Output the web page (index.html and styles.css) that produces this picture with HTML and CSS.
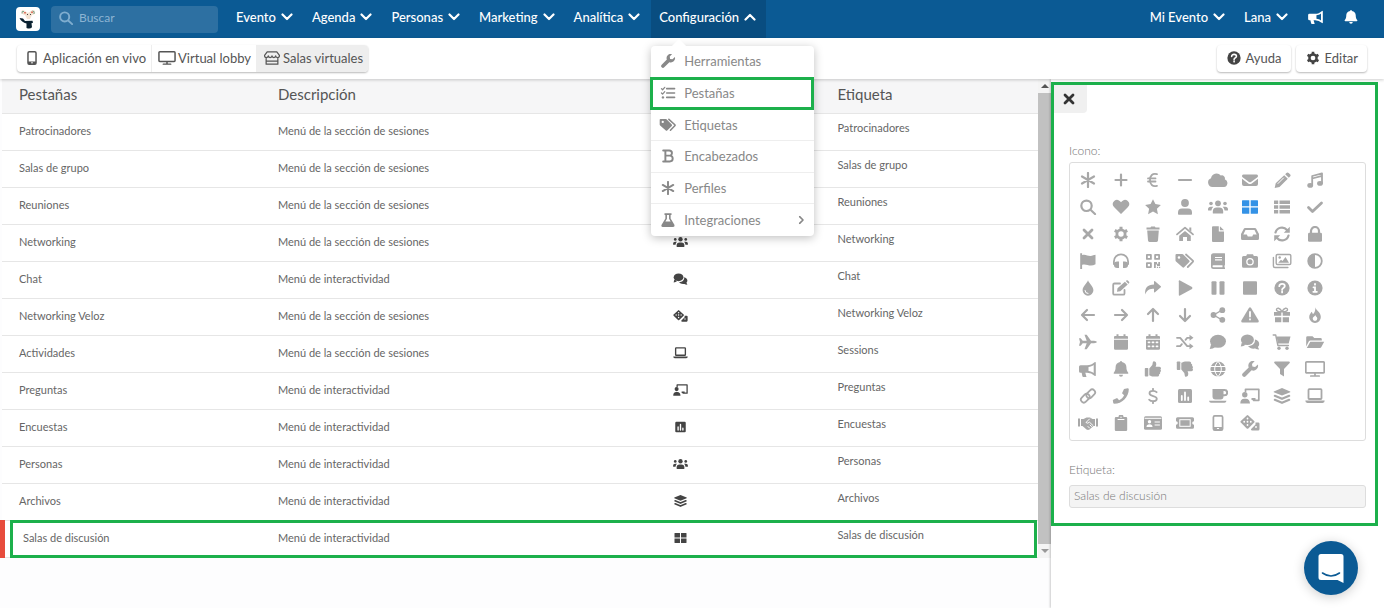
FILE: index.html
```html
<!DOCTYPE html>
<html lang="es">
<head>
<meta charset="utf-8">
<meta name="viewport" content="width=device-width, initial-scale=1">
<title>Pestañas</title>
<link rel="stylesheet" href="styles.css">
</head>
<body>
<svg class="sprite" aria-hidden="true">
<symbol id="asterisk" viewBox="0 0 20 16"><path class="s" d="M10 1v14M4 4.5l12 7M16 4.5l-12 7"/></symbol>
<symbol id="plus" viewBox="0 0 20 16"><path class="s" d="M4.5 8h11M10 2.5v11"/></symbol>
<symbol id="euro" viewBox="0 0 20 16"><path class="s m" d="M14 2.2C9.500 1 7 3.500 7 8s2.500 7 7 5.800M5 6.400h7.500M5 9.500h7.500"/></symbol>
<symbol id="minus" viewBox="0 0 20 16"><path class="s" d="M4 8h12"/></symbol>
<symbol id="cloud" viewBox="0 0 20 16"><path d="M4.500 15a4.500 4.500 0 0 1-1.500-8.700A5.500 5.500 0 0 1 12.800 3.600a3 3 0 0 1 4 3.700A4 4 0 0 1 16 15z"/></symbol>
<symbol id="envelope" viewBox="0 0 20 16"><path d="M3.500 2.500h13a1.500 1.500 0 0 1 .9 2.700L11 10a1.700 1.700 0 0 1-2 0L2.600 5.200a1.500 1.500 0 0 1 .9-2.700zM2 6.800l6.200 4.600a3 3 0 0 0 3.600 0L18 6.800V12a2 2 0 0 1-2 2H4a2 2 0 0 1-2-2z"/></symbol>
<symbol id="pencil" viewBox="0 0 20 16"><path d="M12.200 3.200l3.600 3.600-8.300 8.200-4.800 1 1-4.800zM13.200 2.200l1.200-1.200a1.600 1.600 0 0 1 2.300 0l1.300 1.300a1.600 1.600 0 0 1 0 2.300l-1.200 1.200z"/><path class="k" d="M11.500 6l-5.500 5.500"/></symbol>
<symbol id="music" viewBox="0 0 20 16"><path class="s m" d="M7.200 13V4L17 1.300V11M7.200 6.500L17 3.800"/><ellipse cx="5.200" cy="13.400" rx="2.900" ry="2.300"/><ellipse cx="15" cy="11.400" rx="2.900" ry="2.300"/></symbol>
<symbol id="search" viewBox="0 0 20 16"><circle class="s" cx="8.500" cy="6.800" r="5.200"/><path class="s" d="M12.500 10.800l4.500 4.200"/></symbol>
<symbol id="heart" viewBox="0 0 20 16"><path d="M10 15L3 7.900A4 4 0 0 1 9 2.300l1 1 1-1a4 4 0 0 1 6 5.600z"/></symbol>
<symbol id="star" viewBox="0 0 20 16"><path d="M10 .2l2.400 4.900 5.500.8-4 3.800 1 5.500L10 12.600l-4.900 2.600 1-5.500-4-3.800 5.500-.8z"/></symbol>
<symbol id="user" viewBox="0 0 20 16"><circle cx="10" cy="4" r="3.900"/><path d="M3 15v-1.500a4 4 0 0 1 4-4h6a4 4 0 0 1 4 4V15q0 .8-.8.8H3.800q-.8 0-.8-.8z"/></symbol>
<symbol id="users" viewBox="0 0 20 16"><circle cx="10" cy="4.300" r="2.900"/><circle cx="3" cy="4.500" r="1.800"/><circle cx="17" cy="4.500" r="1.800"/><path d="M4.800 14v-1.500a4 4 0 0 1 4-4h2.400a4 4 0 0 1 4 4V14q0 .6-.6.6H5.400q-.6 0-.6-.6zM0 10.500a2.800 2.800 0 0 1 2.800-2.800h2.500A6 6 0 0 0 3.400 11.500H.6q-.6 0-.6-.6zM20 10.500a2.800 2.800 0 0 0-2.800-2.800h-2.500a6 6 0 0 1 1.900 3.800h2.800q.6 0 .6-.6z"/></symbol>
<symbol id="grid" viewBox="0 0 20 16"><path d="M2.500 1.300h6.800v6H2v-5.500zM10.700 1.300h6.800l.5.500v5.500h-7.300zM2 8.600h7.300v6.100H2.500l-.5-.5zM10.700 8.600H18v5.600l-.5.500h-6.800z"/></symbol>
<symbol id="list" viewBox="0 0 20 16"><path d="M2.300 1.500h3.900v3.600H2V1.800zM7.500 1.500H18v3.600H7.500zM2 6.200h4.200v3.600H2zM7.500 6.200H18v3.600H7.500zM2 10.900h4.200v3.600H2zM7.500 10.900H18v3.600H7.500z"/></symbol>
<symbol id="check" viewBox="0 0 20 16"><path class="s b" d="M3.500 8.500l4 4 9-8.500"/></symbol>
<symbol id="times" viewBox="0 0 20 16"><path class="s b" d="M6 4l8 8M14 4l-8 8"/></symbol>
<symbol id="cog" viewBox="0 0 20 16"><circle class="s b" cx="10" cy="8" r="4.100"/><path class="s t" d="M10 .8v3M10 12.200v3M3.800 4.400l2.600 1.500M13.600 10.100l2.600 1.500M16.200 4.400l-2.600 1.500M6.400 10.100l-2.600 1.500"/></symbol>
<symbol id="trash" viewBox="0 0 20 16"><path d="M3.500 1.500h4l.6-1h3.800l.6 1h4v2h-13zM4.200 4.600h11.600l-.8 9.900a1.500 1.500 0 0 1-1.500 1.400h-7A1.500 1.500 0 0 1 5 14.500z"/></symbol>
<symbol id="home" viewBox="0 0 20 16"><path d="M10 5l5.800 4.800V15H12v-4H8v4H4.200V9.800zM14.300 1.500h2v4.200l-2-1.700z"/><path class="s m" d="M2 8.400l8-6.800 8 6.800"/></symbol>
<symbol id="file" viewBox="0 0 20 16"><path d="M4 1.200Q4 .2 5 .2h5.800v5.200H16V15q0 1-1 1H5q-1 0-1-1zM11.900.2L16 4.300h-4.100z"/></symbol>
<symbol id="inbox" viewBox="0 0 20 16"><path fill-rule="evenodd" d="M5 2h10q.8 0 1.200.7L19 8v4.500a1.500 1.500 0 0 1-1.500 1.500h-15A1.500 1.500 0 0 1 1 12.500V8l2.800-5.300Q4.200 2 5 2zM5.500 4L3.300 8.500h3.500l1 2h4.400l1-2h3.500L14.500 4z"/></symbol>
<symbol id="sync" viewBox="0 0 20 16"><path class="s" d="M3.500 6.500A6.600 6.600 0 0 1 15 4M16.500 9.500A6.600 6.600 0 0 1 5 12"/><path d="M17.800.8v6h-6zM2.200 15.200v-6h6z"/></symbol>
<symbol id="lock" viewBox="0 0 20 16"><rect x="3" y="6.800" width="14" height="9" rx="1.400"/><path class="s" d="M6 7V5a4 4 0 0 1 8 0v2"/></symbol>
<symbol id="flag" viewBox="0 0 20 16"><path d="M2.200.3h1.900v15.600H2.200zM3.800 2.200c3.500-1.500 5.700.9 8.700.8 2 0 3.500-1.200 5-1.200v9.500c-1.500.8-3 1.200-4.500 1.200-3.500 0-5.500-2-9.200-.6z"/></symbol>
<symbol id="headphones" viewBox="0 0 20 16"><path class="s m" d="M2.900 11V8.500a7.100 7.100 0 0 1 14.200 0V11"/><path d="M8 8.500V15H6.200a3.200 3.200 0 0 1 0-6.500zM12 8.500V15h1.800a3.200 3.200 0 0 0 0-6.500z"/></symbol>
<symbol id="qr" viewBox="0 0 20 16"><path class="s m" d="M3.900 1.900h4v4h-4zM12.100 1.900h4v4h-4zM3.900 10.100h4v4h-4z"/><path d="M11 9h3v1.800h1.300V9H17v4h-3v-1.500h-1.200V15H11zM13.900 13.800h1.200V15h-1.200zM16 13.800h1.200V15H16z"/></symbol>
<symbol id="tags" viewBox="0 0 20 16"><path fill-rule="evenodd" d="M.5 2Q.5 1 1.500 1h5.800q.6 0 1 .4l6 6q.8.800 0 1.600l-5.200 5.300q-.8.800-1.600 0L1 8.500q-.5-.5-.5-1zM4 3.200a1.300 1.300 0 1 0 0 2.600 1.300 1.300 0 0 0 0-2.600z"/><path class="s m" d="M11 1.500l6.800 6.200q.6.600 0 1.200L12.800 14"/></symbol>
<symbol id="book" viewBox="0 0 20 16"><path fill-rule="evenodd" d="M5.500.2h11q.5 0 .5.500v11q0 .5-.5.700v2h.5V16H5.500A2.500 2.500 0 0 1 3 13.500V2.700A2.500 2.500 0 0 1 5.500.2zM7 4v1.100h7V4zM7 6.300v1.100h7V6.300zM5.500 12.300a1 1 0 0 0 0 2h9v-2z"/></symbol>
<symbol id="camera" viewBox="0 0 20 16"><path fill-rule="evenodd" d="M3.500 3h2.700L7 1.200h6l.8 1.800h2.700A1.500 1.500 0 0 1 18 4.500v8.800a1.500 1.500 0 0 1-1.500 1.500h-13A1.500 1.500 0 0 1 2 13.300V4.500A1.500 1.500 0 0 1 3.500 3zM10 5a3.800 3.800 0 1 0 0 7.600A3.800 3.800 0 0 0 10 5z"/><circle cx="10" cy="8.800" r="2.500"/></symbol>
<symbol id="images" viewBox="0 0 20 16"><path class="s n" d="M5.500 1.500h12q1.300 0 1.300 1.300v7.400q0 1.300-1.300 1.300h-12q-1.300 0-1.300-1.300V2.800q0-1.300 1.300-1.300zM1.400 4.500V13q0 1.500 1.500 1.500h13"/><path d="M6.200 9.700L9 6.700l1.500 1.200L13.500 4l3.500 5.700z"/><circle cx="7.700" cy="4.500" r="1.200"/></symbol>
<symbol id="contrast" viewBox="0 0 20 16"><circle class="s m" cx="10" cy="8" r="6.800"/><path d="M10 1.500v13a6.500 6.500 0 0 1 0-13z"/></symbol>
<symbol id="drop" viewBox="0 0 20 16"><path d="M10 .3c1 3.200 5.400 5.900 5.400 10a5.400 5.400 0 0 1-10.800 0C4.600 6.200 9 3.500 10 .3z"/><path class="k" d="M7 10.500a3 3 0 0 0 3 3"/></symbol>
<symbol id="edit" viewBox="0 0 20 16"><path class="s m" d="M13.500 10v3.400q0 1.300-1.300 1.300H3.500q-1.300 0-1.300-1.300V4.800q0-1.300 1.300-1.300H9"/><path d="M6.500 8.300l7.400-6.600 2.800 2.900-7.400 6.600-3.300.5zM14.800 1l.6-.5q.8-.6 1.500 0l1.100 1.200q.7.800 0 1.500l-.6.600z"/></symbol>
<symbol id="forward" viewBox="0 0 20 16"><path d="M2.300 14.500C1.500 8 4.500 4.600 11 4.600V1.500q.2-.8 1-.3l5.800 5.100q.5.500 0 1L12 12.300q-.8.500-1-.3V8.800c-4 0-7 .8-8.700 5.700z"/></symbol>
<symbol id="play" viewBox="0 0 20 16"><path d="M3.800 1.200q0-1.200 1.200-.7l12 6.600q.9.900 0 1.800l-12 6.600q-1.200.5-1.200-.7z"/></symbol>
<symbol id="pause" viewBox="0 0 20 16"><rect x="3.500" y="1.200" width="5" height="13.600" rx="1"/><rect x="11.500" y="1.200" width="5" height="13.600" rx="1"/></symbol>
<symbol id="stop" viewBox="0 0 20 16"><rect x="3" y="1.300" width="14" height="13.400" rx="1"/></symbol>
<symbol id="question" viewBox="0 0 20 16"><circle cx="10" cy="8" r="7.600"/><path class="k w" d="M7.300 6.200C7.300 3 12.800 3.300 12.800 6c0 2-2.700 1.900-2.700 3.700M10.100 11.500v.9"/></symbol>
<symbol id="info" viewBox="0 0 20 16"><circle cx="10" cy="8" r="7.600"/><path class="k w" d="M8.500 7.300H10v4.200M8.300 11.800h3.600M10 3.800v.9"/></symbol>
<symbol id="left" viewBox="0 0 20 16"><path class="s" d="M16 8H4.500M9 3L4 8l5 5"/></symbol>
<symbol id="right" viewBox="0 0 20 16"><path class="s" d="M4 8h11.500M11 3l5 5-5 5"/></symbol>
<symbol id="up" viewBox="0 0 20 16"><path class="s" d="M10 14V2.500M5 7l5-5 5 5"/></symbol>
<symbol id="down" viewBox="0 0 20 16"><path class="s" d="M10 2v11.500M5 9l5 5 5-5"/></symbol>
<symbol id="share" viewBox="0 0 20 16"><circle cx="5.500" cy="8" r="2.900"/><circle cx="14.300" cy="3.200" r="2.900"/><circle cx="14.300" cy="12.800" r="2.900"/><path class="s n" d="M14 3.200L5.500 8l8.500 4.800"/></symbol>
<symbol id="warning" viewBox="0 0 20 16"><path d="M8.900.9q1.100-1.400 2.200 0l7.500 12.700q.6 1.700-1.100 1.900h-15Q.8 15.300 1.400 13.600z"/><path class="k w" d="M10 5v4.500M10 12.200v.4"/></symbol>
<symbol id="gift" viewBox="0 0 20 16"><path d="M2 5h7.300v3.800H2zM10.700 5H18v3.800h-7.300zM3 10.200h6.300v5H3zM10.700 10.200H17v5h-6.300z"/><path class="s n" d="M10 4.800C5.500 4.800 4.500 4 4.500 2.700 4.500.5 8 .2 10 4.800zM10 4.800c4.500 0 5.500-.8 5.500-2.100C15.500.5 12 .2 10 4.800z"/></symbol>
<symbol id="fire" viewBox="0 0 20 16"><path d="M10.300.2c.8 3.200 5.500 4.800 5.500 9.800a5.800 5.800 0 0 1-11.600.2C4.200 7.300 6 6 6.500 4.700c.8.700 1.300 1.500 1.400 2.600C9.700 5.800 10.600 3 10.300.2z"/><path class="h" d="M10.300 8c.3 1.600 2 2 2 3.600a2.300 2.300 0 0 1-4.600 0C7.700 10 9.800 9.600 10.300 8z"/></symbol>
<symbol id="plane" viewBox="0 0 20 16"><path d="M1 4.300h1.700l2 2.400h4L6.500.7h2.200l4.300 6h3q2.700.3 3 1.300-.3 1-3 1.300h-3l-4.300 6H6.500l2.200-6h-4l-2 2.400H1L2 8z"/></symbol>
<symbol id="calendar" viewBox="0 0 20 16"><path d="M4 2h1.500V.2h2V2h5V.2h2V2H16q1 0 1 1v1.800H3V3q0-1 1-1zM3 5.700h14v8.800q0 1.300-1.300 1.300H4.300Q3 15.800 3 14.500z"/></symbol>
<symbol id="days" viewBox="0 0 20 16"><use href="#calendar"/><path class="k w" d="M5.500 8.300h1M9.500 8.300h1M13.500 8.300h1M5.500 12.300h1M9.500 12.300h1M13.500 12.300h1"/></symbol>
<symbol id="random" viewBox="0 0 20 16"><path class="s m" d="M2 3.800h3.200l7 8.400H15M2 12.200h3.200l1.700-2M10.500 5.800l1.700-2H15"/><path d="M14.500.8l4 3-4 3zM14.500 9.200l4 3-4 3z"/></symbol>
<symbol id="comment" viewBox="0 0 20 16"><ellipse cx="10" cy="7.300" rx="8" ry="6.500"/><path d="M3.200 10l-1.500 5q3.500 0 5.300-1.800z"/></symbol>
<symbol id="comments" viewBox="0 0 20 16"><ellipse cx="7.400" cy="5.800" rx="6.500" ry="5.200"/><path d="M1.800 8.500L.8 12.500q3 0 4.700-1.800zM14.900 5.500c2.500.5 4.300 2.200 4.300 4.400 0 1.200-.5 2.200-1.300 3l1.300 2.600q-2.500 0-4-1c-3 .5-5.800-.3-7.200-2.400 4.200 0 7.500-2.800 6.900-6.600z"/></symbol>
<symbol id="cart" viewBox="0 0 20 16"><path class="s n" d="M1.200 1h2.500l2.200 10.500h10.500"/><path d="M4.500 2.500h14l-1.800 7H6z"/><circle cx="7" cy="14.200" r="1.700"/><circle cx="15" cy="14.200" r="1.700"/></symbol>
<symbol id="folder" viewBox="0 0 20 16"><path d="M1.200 12.500v-9q0-1.300 1.300-1.300h5l1.800 1.700h6.200q1.300 0 1.300 1.300v1.200H5.400q-1 0-1.500.9zM5.300 7.700h13.900l-3 5.500q-.4.700-1.200.7H1.800z"/></symbol>
<symbol id="bullhorn" viewBox="0 0 20 16"><path fill-rule="evenodd" d="M2.500 4.300H9c3 0 5.500-1.200 7.500-3q1.300-.9 1.300.5v12.400q0 1.400-1.300.5-3-2.900-7.500-3H2.500Q1 11.700 1 10.200V5.800q0-1.500 1.500-1.500zM10.500 6v4c2 .3 3.800.9 5.200 2V4C14.300 5.100 12.500 5.700 10.500 6z"/><path d="M3.500 11h3.600l1.400 4.900H5.400q-.8 0-1-.7z"/></symbol>
<symbol id="bell" viewBox="0 0 20 16"><path d="M9 1a1 1 0 0 1 2 0c2.800.5 4.400 2.500 4.400 5 0 3 .7 4.200 1.700 5.400.5.600.2 1.400-.6 1.400h-13c-.8 0-1.100-.8-.6-1.400C3.900 10.200 4.600 9 4.600 6c0-2.500 1.600-4.500 4.400-5zM8 13.800h4a2 2 0 0 1-4 0z"/></symbol>
<symbol id="thumb" viewBox="0 0 20 16"><rect x="1.800" y="7" width="3.500" height="8.500" rx=".7"/><path d="M6.300 7.500l3-3.600.6-2.800q.3-1 1.200-.9 2.200.3 2.200 2.800 0 1-.7 2.700h3.800q1.600.2 1.600 1.600 0 .8-.6 1.300.8.600.5 1.500-.2.800-.9 1.100.4.600.1 1.300-.3.700-1 .8.200 1-.4 1.600-.5.600-1.500.6H10c-1.500 0-2.300-.8-3.700-1.300z"/></symbol>
<symbol id="thumbdown" viewBox="0 0 20 16"><g transform="translate(0 16) scale(1 -1)"><use href="#thumb"/></g></symbol>
<symbol id="globe" viewBox="0 0 20 16"><circle cx="10" cy="8" r="7.600"/><path class="k" d="M2 5.500h16M2 10.500h16M10 .4C5.500 5 5.500 11 10 15.600M10 .4c4.500 4.600 4.500 10.600 0 15.200"/></symbol>
<symbol id="wrench" viewBox="0 0 20 16"><path d="M17.900 3.500a4.800 4.800 0 0 1-6.300 5.800l-5.900 5.900a2 2 0 0 1-2.900-2.900l5.900-5.900A4.800 4.800 0 0 1 14.700.1L12 2.900l.4 2.700 2.700.4z"/></symbol>
<symbol id="filter" viewBox="0 0 20 16"><path d="M2.800.5h14.400q1.100.6.500 1.500L12 8v7.500l-4-2.600V8L2.300 2Q1.700 1.100 2.800.5z"/></symbol>
<symbol id="desktop" viewBox="0 0 20 16"><path class="s d" d="M1.800.9h16.400q1 0 1 1v9q0 1-1 1H1.800q-1 0-1-1v-9q0-1 1-1zM10 12v2.500M5.800 15h8.400"/></symbol>
<symbol id="link" viewBox="0 0 20 16"><g transform="rotate(-45 10 8)"><rect class="s m" x="1.600" y="4.700" width="9.800" height="5.800" rx="2.900"/><rect class="s m" x="8.600" y="5.500" width="9.800" height="5.800" rx="2.900"/></g></symbol>
<symbol id="phone" viewBox="0 0 20 16"><path d="M13 .9l3.700-.7q1 0 1.100 1C17.800 9 11 15.800 3.200 15.800q-.8 0-1-1L1.800 12l4.300-1.900 2 2.100c2.300-1.100 4-2.800 5-5L11 5.200z"/></symbol>
<symbol id="dollar" viewBox="0 0 20 16"><path class="s m" d="M13.600 4.200C12.600 3.200 11.500 2.900 10 2.900c-2.200 0-3.500 1-3.500 2.400 0 3.600 7.300 1.900 7.300 5.400 0 1.600-1.500 2.500-3.800 2.500-1.700 0-3-.5-3.800-1.500M10 .8v2M10 13.200v2"/></symbol>
<symbol id="poll" viewBox="0 0 20 16"><rect x="3" y="1" width="14" height="14" rx="1.500"/><path class="k w" d="M6.800 8v4M10 4.500V12M13.200 9.500V12"/></symbol>
<symbol id="coffee" viewBox="0 0 20 16"><path fill-rule="evenodd" d="M4.500 1h12a3.600 3.600 0 0 1 0 7.300h-1V8.500a3 3 0 0 1-3 3h-5a3 3 0 0 1-3-3zM15.500 3v3.300h1a1.600 1.600 0 0 0 0-3.300zM1 12.800h17.500q-.3 2-2 2H3q-1.700 0-2-2z"/></symbol>
<symbol id="teacher" viewBox="0 0 20 16"><path class="s d" d="M5.500 3.500V1.300h13.300v11H13.500"/><circle cx="4.800" cy="6.800" r="2.700"/><path d="M.3 15.500q0-4.700 4-4.700h1.500q3.900 0 4.200 4.700zM11.500 10h4v2h-4z"/></symbol>
<symbol id="layers" viewBox="0 0 20 16"><path d="M10 0l8.200 3.400q.4.400 0 .8L10 7.600 1.800 4.200q-.4-.4 0-.8z"/><path class="s" d="M2.800 7.800l7.200 3 7.200-3M2.800 11.800l7.200 3 7.200-3"/></symbol>
<symbol id="laptop" viewBox="0 0 20 16"><rect class="s m" x="3.500" y="1.200" width="13" height="9.800" rx=".7"/><path d="M.3 12.600h19.400q0 2.400-2 2.400H2.300q-2 0-2-2.400z"/></symbol>
<symbol id="handshake" viewBox="0 0 20 16"><path d="M0 3.500h2v8H0zM18 3.500h2v8h-2zM3 4h2.500L8.500 2.500h3.500L14.500 4H17v7h-1.500l-4 3.500q-1.500.8-3 0L4.500 11H3z"/><path class="k" d="M11.500 4L8 7.500q1.500 1.500 3.500-.3L15 10.500M12 10l1.500 1.500M10 11.500l1.500 1.500"/></symbol>
<symbol id="clipboard" viewBox="0 0 20 16"><path d="M5 2h2.500a2.500 2.500 0 0 1 5 0H15q1.200 0 1.200 1.200v11.500q0 1.200-1.200 1.200H5q-1.200 0-1.200-1.200V3.200Q3.800 2 5 2z"/><path class="k" d="M7 4.500h6M10 2v.6"/></symbol>
<symbol id="idcard" viewBox="0 0 20 16"><rect x="1" y="1.300" width="18" height="13.400" rx="1.500"/><circle class="h" cx="6.500" cy="6.700" r="1.700"/><path class="h" d="M3.500 12q0-2.800 3-2.800t3 2.800z"/><path class="k" d="M2 3.300h16M12 7h4.500M12 10h4.500"/></symbol>
<symbol id="ticket" viewBox="0 0 20 16"><path d="M2.500 2.300h15q1.500 0 1.500 1.500v2.400a1.800 1.800 0 0 0 0 3.600v2.400q0 1.500-1.500 1.500h-15q-1.500 0-1.500-1.500V9.800a1.800 1.800 0 0 0 0-3.600V3.800q0-1.500 1.500-1.500z"/><rect class="k" x="4.800" y="4.700" width="10.400" height="6.600"/></symbol>
<symbol id="mobile" viewBox="0 0 20 16"><rect class="s d" x="5.400" y=".9" width="9.200" height="14.200" rx="1.400"/><path d="M5.400 12h9.200v3H5.400z"/><path class="k" d="M9.300 13.500h1.400"/></symbol>
<symbol id="dice" viewBox="0 0 20 16"><path d="M6.700.5q.8-.8 1.600 0l5.900 5.400q.8.800 0 1.600l-5.900 5.900q-.8.800-1.600 0L.8 7.500q-.8-.8 0-1.600zM15.500 7.500h2.700q1.300 0 1.300 1.300V14q0 1.500-1.300 1.500h-6q-1.200 0-1.300-1.300l4.600-4.700z"/><path class="k w" d="M7.500 3.400v.1M4.200 6.700v.1M7.500 6.700v.1M10.800 6.700v.1M7.500 10v.1M16 12v.1"/></symbol>
<symbol id="tasks" viewBox="0 0 20 16"><path class="s m" d="M8.500 3h9M8.500 8h9M8.500 13h9"/><path class="s n" d="M2.500 3l1.300 1.300L6.300 1.500M2.500 8l1.300 1.300 2.500-2.800"/><circle cx="4.200" cy="13" r="1.400"/></symbol>
<symbol id="bold" viewBox="0 0 20 16"><path class="s" d="M4.500 1.800h6.800c4.300 0 4.300 5.800 0 5.800H7h5c4.500 0 4.500 6.600 0 6.600H4.500M7 1.800v12.400"/></symbol>
<symbol id="flask" viewBox="0 0 20 16"><path fill-rule="evenodd" d="M6 .3h8v1.900h-1v4l4.300 7.300q1 2.200-1.300 2.400H4q-2.300-.2-1.300-2.400L7 6.200v-4H6zM8.800 2.200v4.500L7 9.800h6l-1.800-3.100V2.200z"/></symbol>
<symbol id="store" viewBox="0 0 20 16"><path class="s n" d="M4.500 1h11L18.500 5q0 2.500-2.100 2.500T14.200 5.500q0 2-2.100 2T10 5.500q0 2-2.100 2t-2.100-2q0 2-2.200 2T1.500 5zM3.300 8v7h13.400V8M3.300 11.500h13.400"/></symbol>
<symbol id="chevron" viewBox="0 0 12 8"><path class="s" d="M1.500 1.500L6 6l4.500-4.500"/></symbol>
</svg>

<header class="topbar">
  <a class="logo" href="#" aria-label="Inicio">
    <svg viewBox="0 0 24 24" aria-hidden="true"><path fill="#f4e3d2" d="M9 4q-3-2-3.500.5T9 8l2 4h3l2-4q4-1 3-3.500T15 4l-3 2z"/><path fill="none" stroke="#7aa58c" d="M6 6.500q-.5-3 2-2M18 7q1-3-1.500-3"/><path fill="#dc7a68" d="M8 5h2v1.500H8zM15 4.500h2V6h-2z"/><path fill="#444" d="M11 7h1v1h-1zM14 7h1v1h-1z"/><path fill="#0b2231" d="M3.500 11l3.500.5 2 2.500 7.500-.3.500 2-1.500.6.500 4q-2 2-5.500.6v-4.500q-5-1-7-5.400z"/></svg>
  </a>
  <label class="search">
    <svg class="icon" aria-hidden="true"><use href="#search"/></svg>
    <input type="search" placeholder="Buscar" aria-label="Buscar">
  </label>
  <nav class="nav">
    <button class="nav-item" type="button">Evento<svg class="caret"><use href="#chevron"/></svg></button>
    <button class="nav-item" type="button">Agenda<svg class="caret"><use href="#chevron"/></svg></button>
    <button class="nav-item" type="button">Personas<svg class="caret"><use href="#chevron"/></svg></button>
    <button class="nav-item" type="button">Marketing<svg class="caret"><use href="#chevron"/></svg></button>
    <button class="nav-item" type="button">Analítica<svg class="caret"><use href="#chevron"/></svg></button>
    <div class="nav-group">
      <button class="nav-item open" type="button" aria-expanded="true">Configuración<svg class="caret"><use href="#chevron"/></svg></button>
      <div class="menu">
        <a href="#"><svg class="icon"><use href="#wrench"/></svg>Herramientas</a>
        <a href="#" class="marked"><svg class="icon"><use href="#tasks"/></svg>Pestañas</a>
        <a href="#"><svg class="icon"><use href="#tags"/></svg>Etiquetas</a>
        <a href="#"><svg class="icon"><use href="#bold"/></svg>Encabezados</a>
        <a href="#"><svg class="icon"><use href="#asterisk"/></svg>Perfiles</a>
        <a href="#"><svg class="icon"><use href="#flask"/></svg>Integraciones<svg class="caret side-caret"><use href="#chevron"/></svg></a>
      </div>
    </div>
  </nav>
  <div class="account">
    <button class="nav-item" type="button">Mi Evento<svg class="caret"><use href="#chevron"/></svg></button>
    <button class="nav-item" type="button">Lana<svg class="caret"><use href="#chevron"/></svg></button>
    <button class="nav-icon" type="button" aria-label="Anuncios"><svg class="icon"><use href="#bullhorn"/></svg></button>
    <button class="nav-icon" type="button" aria-label="Notificaciones"><svg class="icon"><use href="#bell"/></svg></button>
  </div>
</header>

<div class="toolbar">
  <div class="tabs">
    <button type="button"><svg class="icon"><use href="#mobile"/></svg>Aplicación en vivo</button>
    <button type="button"><svg class="icon"><use href="#desktop"/></svg>Virtual lobby</button>
    <button type="button" class="active"><svg class="icon"><use href="#store"/></svg>Salas virtuales</button>
  </div>
  <div class="actions">
    <button type="button"><svg class="icon"><use href="#question"/></svg>Ayuda</button>
    <button type="button"><svg class="icon"><use href="#cog"/></svg>Editar</button>
  </div>
</div>

<main class="main">
  <section class="list">
    <div class="list-body">
      <table>
        <thead><tr><th scope="col">Pestañas</th><th scope="col">Descripción</th><th scope="col"></th><th scope="col">Etiqueta</th></tr></thead>
        <tbody>
          <tr><td>Patrocinadores</td><td>Menú de la sección de sesiones</td><td></td><td>Patrocinadores</td></tr>
          <tr><td>Salas de grupo</td><td>Menú de la sección de sesiones</td><td></td><td>Salas de grupo</td></tr>
          <tr><td>Reuniones</td><td>Menú de la sección de sesiones</td><td></td><td>Reuniones</td></tr>
          <tr><td>Networking</td><td>Menú de la sección de sesiones</td><td><svg class="icon"><use href="#users"/></svg></td><td>Networking</td></tr>
          <tr><td>Chat</td><td>Menú de interactividad</td><td><svg class="icon"><use href="#comments"/></svg></td><td>Chat</td></tr>
          <tr><td>Networking Veloz</td><td>Menú de la sección de sesiones</td><td><svg class="icon"><use href="#dice"/></svg></td><td>Networking Veloz</td></tr>
          <tr><td>Actividades</td><td>Menú de la sección de sesiones</td><td><svg class="icon"><use href="#laptop"/></svg></td><td>Sessions</td></tr>
          <tr><td>Preguntas</td><td>Menú de interactividad</td><td><svg class="icon"><use href="#teacher"/></svg></td><td>Preguntas</td></tr>
          <tr><td>Encuestas</td><td>Menú de interactividad</td><td><svg class="icon"><use href="#poll"/></svg></td><td>Encuestas</td></tr>
          <tr><td>Personas</td><td>Menú de interactividad</td><td><svg class="icon"><use href="#users"/></svg></td><td>Personas</td></tr>
          <tr><td>Archivos</td><td>Menú de interactividad</td><td><svg class="icon"><use href="#layers"/></svg></td><td>Archivos</td></tr>
          <tr class="selected"><td>Salas de discusión</td><td>Menú de interactividad</td><td><svg class="icon"><use href="#grid"/></svg></td><td>Salas de discusión</td></tr>
        </tbody>
      </table>
    </div>
    <div class="scrollbar" aria-hidden="true"><span class="arrow-up"></span><span class="thumb"></span><span class="arrow-down"></span></div>
  </section>

  <aside class="panel">
    <div class="panel-box">
      <button class="close" type="button" aria-label="Cerrar"><svg class="icon"><use href="#times"/></svg></button>
      <div class="form">
        <span class="label" id="icon-label">Icono:</span>
        <div class="picker" role="group" aria-labelledby="icon-label">
          <button type="button" aria-label="Asterisco"><svg class="icon"><use href="#asterisk"/></svg></button>
          <button type="button" aria-label="Más"><svg class="icon"><use href="#plus"/></svg></button>
          <button type="button" aria-label="Euro"><svg class="icon"><use href="#euro"/></svg></button>
          <button type="button" aria-label="Menos"><svg class="icon"><use href="#minus"/></svg></button>
          <button type="button" aria-label="Nube"><svg class="icon"><use href="#cloud"/></svg></button>
          <button type="button" aria-label="Sobre"><svg class="icon"><use href="#envelope"/></svg></button>
          <button type="button" aria-label="Lápiz"><svg class="icon"><use href="#pencil"/></svg></button>
          <button type="button" aria-label="Música"><svg class="icon"><use href="#music"/></svg></button>
          <button type="button" aria-label="Lupa"><svg class="icon"><use href="#search"/></svg></button>
          <button type="button" aria-label="Corazón"><svg class="icon"><use href="#heart"/></svg></button>
          <button type="button" aria-label="Estrella"><svg class="icon"><use href="#star"/></svg></button>
          <button type="button" aria-label="Persona"><svg class="icon"><use href="#user"/></svg></button>
          <button type="button" aria-label="Grupo"><svg class="icon"><use href="#users"/></svg></button>
          <button type="button" aria-label="Cuadrícula" aria-pressed="true"><svg class="icon"><use href="#grid"/></svg></button>
          <button type="button" aria-label="Lista"><svg class="icon"><use href="#list"/></svg></button>
          <button type="button" aria-label="Visto"><svg class="icon"><use href="#check"/></svg></button>
          <button type="button" aria-label="Aspa"><svg class="icon"><use href="#times"/></svg></button>
          <button type="button" aria-label="Engranaje"><svg class="icon"><use href="#cog"/></svg></button>
          <button type="button" aria-label="Papelera"><svg class="icon"><use href="#trash"/></svg></button>
          <button type="button" aria-label="Casa"><svg class="icon"><use href="#home"/></svg></button>
          <button type="button" aria-label="Archivo"><svg class="icon"><use href="#file"/></svg></button>
          <button type="button" aria-label="Bandeja"><svg class="icon"><use href="#inbox"/></svg></button>
          <button type="button" aria-label="Sincronizar"><svg class="icon"><use href="#sync"/></svg></button>
          <button type="button" aria-label="Candado"><svg class="icon"><use href="#lock"/></svg></button>
          <button type="button" aria-label="Bandera"><svg class="icon"><use href="#flag"/></svg></button>
          <button type="button" aria-label="Auriculares"><svg class="icon"><use href="#headphones"/></svg></button>
          <button type="button" aria-label="Código QR"><svg class="icon"><use href="#qr"/></svg></button>
          <button type="button" aria-label="Etiquetas"><svg class="icon"><use href="#tags"/></svg></button>
          <button type="button" aria-label="Libro"><svg class="icon"><use href="#book"/></svg></button>
          <button type="button" aria-label="Cámara"><svg class="icon"><use href="#camera"/></svg></button>
          <button type="button" aria-label="Imágenes"><svg class="icon"><use href="#images"/></svg></button>
          <button type="button" aria-label="Contraste"><svg class="icon"><use href="#contrast"/></svg></button>
          <button type="button" aria-label="Gota"><svg class="icon"><use href="#drop"/></svg></button>
          <button type="button" aria-label="Editar"><svg class="icon"><use href="#edit"/></svg></button>
          <button type="button" aria-label="Reenviar"><svg class="icon"><use href="#forward"/></svg></button>
          <button type="button" aria-label="Reproducir"><svg class="icon"><use href="#play"/></svg></button>
          <button type="button" aria-label="Pausa"><svg class="icon"><use href="#pause"/></svg></button>
          <button type="button" aria-label="Detener"><svg class="icon"><use href="#stop"/></svg></button>
          <button type="button" aria-label="Pregunta"><svg class="icon"><use href="#question"/></svg></button>
          <button type="button" aria-label="Información"><svg class="icon"><use href="#info"/></svg></button>
          <button type="button" aria-label="Izquierda"><svg class="icon"><use href="#left"/></svg></button>
          <button type="button" aria-label="Derecha"><svg class="icon"><use href="#right"/></svg></button>
          <button type="button" aria-label="Arriba"><svg class="icon"><use href="#up"/></svg></button>
          <button type="button" aria-label="Abajo"><svg class="icon"><use href="#down"/></svg></button>
          <button type="button" aria-label="Compartir"><svg class="icon"><use href="#share"/></svg></button>
          <button type="button" aria-label="Aviso"><svg class="icon"><use href="#warning"/></svg></button>
          <button type="button" aria-label="Regalo"><svg class="icon"><use href="#gift"/></svg></button>
          <button type="button" aria-label="Fuego"><svg class="icon"><use href="#fire"/></svg></button>
          <button type="button" aria-label="Avión"><svg class="icon"><use href="#plane"/></svg></button>
          <button type="button" aria-label="Calendario"><svg class="icon"><use href="#calendar"/></svg></button>
          <button type="button" aria-label="Días"><svg class="icon"><use href="#days"/></svg></button>
          <button type="button" aria-label="Aleatorio"><svg class="icon"><use href="#random"/></svg></button>
          <button type="button" aria-label="Comentario"><svg class="icon"><use href="#comment"/></svg></button>
          <button type="button" aria-label="Comentarios"><svg class="icon"><use href="#comments"/></svg></button>
          <button type="button" aria-label="Carrito"><svg class="icon"><use href="#cart"/></svg></button>
          <button type="button" aria-label="Carpeta"><svg class="icon"><use href="#folder"/></svg></button>
          <button type="button" aria-label="Megáfono"><svg class="icon"><use href="#bullhorn"/></svg></button>
          <button type="button" aria-label="Campana"><svg class="icon"><use href="#bell"/></svg></button>
          <button type="button" aria-label="Me gusta"><svg class="icon"><use href="#thumb"/></svg></button>
          <button type="button" aria-label="No me gusta"><svg class="icon"><use href="#thumbdown"/></svg></button>
          <button type="button" aria-label="Globo"><svg class="icon"><use href="#globe"/></svg></button>
          <button type="button" aria-label="Llave inglesa"><svg class="icon"><use href="#wrench"/></svg></button>
          <button type="button" aria-label="Filtro"><svg class="icon"><use href="#filter"/></svg></button>
          <button type="button" aria-label="Pantalla"><svg class="icon"><use href="#desktop"/></svg></button>
          <button type="button" aria-label="Enlace"><svg class="icon"><use href="#link"/></svg></button>
          <button type="button" aria-label="Teléfono"><svg class="icon"><use href="#phone"/></svg></button>
          <button type="button" aria-label="Dólar"><svg class="icon"><use href="#dollar"/></svg></button>
          <button type="button" aria-label="Encuesta"><svg class="icon"><use href="#poll"/></svg></button>
          <button type="button" aria-label="Café"><svg class="icon"><use href="#coffee"/></svg></button>
          <button type="button" aria-label="Ponente"><svg class="icon"><use href="#teacher"/></svg></button>
          <button type="button" aria-label="Capas"><svg class="icon"><use href="#layers"/></svg></button>
          <button type="button" aria-label="Portátil"><svg class="icon"><use href="#laptop"/></svg></button>
          <button type="button" aria-label="Acuerdo"><svg class="icon"><use href="#handshake"/></svg></button>
          <button type="button" aria-label="Portapapeles"><svg class="icon"><use href="#clipboard"/></svg></button>
          <button type="button" aria-label="Tarjeta"><svg class="icon"><use href="#idcard"/></svg></button>
          <button type="button" aria-label="Entrada"><svg class="icon"><use href="#ticket"/></svg></button>
          <button type="button" aria-label="Móvil"><svg class="icon"><use href="#mobile"/></svg></button>
          <button type="button" aria-label="Dados"><svg class="icon"><use href="#dice"/></svg></button>
        </div>
        <label class="label" for="tag">Etiqueta:</label>
        <input class="field" id="tag" type="text" value="Salas de discusión">
      </div>
    </div>
  </aside>
</main>

<button class="chat" type="button" aria-label="Abrir chat">
  <svg viewBox="0 0 28 32" aria-hidden="true"><path fill="#fff" d="M4 2h20q2.500 0 2.500 2.500V31l-6-3H4q-2.500 0-2.500-2.500v-21Q1.500 2 4 2z"/><path fill="none" stroke="#0b5a94" stroke-width="1.600" stroke-linecap="round" d="M5.500 21q8.500 6 17 0"/></svg>
</button>
</body>
</html>
```

FILE: styles.css
```css
* { box-sizing: border-box; }

body {
  margin: 0;
  min-height: 100vh;
  display: flex;
  flex-direction: column;
  font-family: Lato, "Open Sans", sans-serif;
  font-size: 12px;
  line-height: 16px;
  color: #666;
  background: #fdfdfe;
}

button, input { font: inherit; color: inherit; }
button { border: 0; padding: 0; background: none; cursor: pointer; }
a { color: inherit; text-decoration: none; }

/* Icons */
.sprite { position: absolute; width: 0; height: 0; }
.icon { width: 20px; height: 16px; fill: currentColor; flex: none; display: block; }
.s { fill: none; stroke: currentColor; stroke-width: 2.2; stroke-linecap: round; stroke-linejoin: round; }
.m { stroke-width: 1.8; }
.n { stroke-width: 1.4; }
.d { stroke-width: 1.7; }
.b { stroke-width: 2.8; }
.t { stroke-width: 3; stroke-linecap: butt; }
.k { fill: none; stroke: #fff; stroke-width: 1; stroke-linecap: round; }
.w { stroke-width: 1.8; }
.h { fill: #fff; }
.caret { width: 12px; height: 8px; flex: none; }

/* Top bar */
.topbar {
  display: flex;
  align-items: center;
  height: 38px;
  padding: 0 16px;
  background: #0b5a94;
  color: #fff;
}
.logo { width: 24px; height: 24px; background: #fff; border-radius: 4px; }
.logo svg { display: block; width: 24px; height: 24px; }
.search {
  display: flex;
  align-items: center;
  gap: 4px;
  width: 167px;
  height: 27px;
  margin: 0 10px 0 11px;
  padding: 0 6px 2px;
  border-radius: 4px;
  background: #2d70a2;
  color: #7fadcf;
}
.search .icon { width: 18px; height: 14px; }
.search input { min-width: 0; flex: 1; padding: 0; border: 0; outline: 0; background: none; font-size: 12px; }
.search input::placeholder { color: #8cb4d2; }
.nav { display: flex; gap: 1px; }
.nav-group { position: relative; }
.nav-item {
  display: flex;
  align-items: center;
  gap: 5px;
  height: 38px;
  padding: 0 10px 4px 8px;
  font-size: 13px;
  font-weight: 500;
}
.nav-item.open { background: #094d80; }
.nav-item.open .caret { transform: rotate(180deg); }
.account { display: flex; align-items: center; gap: 1px; margin-left: auto; }
.nav-icon { padding: 0 8px 4px; }
.nav-icon .icon { width: 18px; height: 14px; }

/* Dropdown menu */
.menu {
  position: absolute;
  z-index: 5;
  top: 46px;
  left: 0;
  display: grid;
  grid-auto-rows: 1fr;
  width: 163px;
  height: 190px;
  background: #fff;
  border-radius: 4px;
  box-shadow: 0 2px 10px rgba(0, 0, 0, .25);
  color: #888;
  font-size: 13px;
}
.menu::before {
  content: "";
  position: absolute;
  top: -5px;
  left: 23px;
  width: 10px;
  height: 10px;
  background: #fff;
  transform: rotate(45deg);
}
.menu a {
  position: relative;
  display: flex;
  align-items: center;
  gap: 7px;
  padding: 0 8px;
  border-bottom: 1px solid #eee;
}
.menu a:last-child { border-bottom: 0; }
.menu .icon { width: 18px; height: 14px; }
.menu .marked::after {
  content: "";
  position: absolute;
  inset: -1px 0 -2px -1px;
  border: 3px solid #1cb04b;
}
.menu .side-caret { width: 9px; height: 6px; margin-left: auto; transform: rotate(-90deg); }

/* Toolbar */
.toolbar {
  position: relative;
  z-index: 1;
  display: flex;
  justify-content: space-between;
  align-items: center;
  height: 41px;
  padding: 0 17px;
  background: #fff;
  box-shadow: 0 1px 3px rgba(0, 0, 0, .2);
  font-size: 13px;
  color: #555;
}
.tabs, .actions button { border-radius: 4px; box-shadow: 0 1px 2px rgba(0, 0, 0, .28); }
.tabs { display: flex; }
.tabs button, .actions button { display: flex; align-items: center; height: 27px; padding-bottom: 2px; }
.tabs button { gap: 2px; padding-left: 6px; padding-right: 5px; border-right: 1px solid #eee; }
.tabs .active { background: #eee; border-right: 0; border-radius: 0 4px 4px 0; }
.tabs .icon { width: 18px; height: 14px; }
.actions { display: flex; gap: 5px; }
.actions button { gap: 3px; padding-left: 8px; padding-right: 9px; }
.actions .icon { width: 18px; height: 14px; color: #444; }

/* Table */
.main { flex: 1; display: flex; }
.list { flex: 1; display: flex; align-items: flex-start; }
.list-body { flex: 1; padding-left: 2px; }
table { width: 100%; table-layout: fixed; border-collapse: separate; border-spacing: 0; background: #fff; }
th, td { height: 37px; padding: 0 17px 2px; text-align: left; border-bottom: 1px solid #e6e6e6; }
th { width: 27%; height: 35px; padding-bottom: 4px; background: #f6f6f7; font-size: 15px; font-weight: 400; color: #555; }
th:first-child { width: 25%; }
th:last-child { width: 21%; }
td { font-size: 11px; }
td:nth-child(3) .icon { width: 15px; height: 12px; margin: 0 auto; color: #444; }
td:last-child { padding-bottom: 8px; }
.selected { position: relative; }
.selected td:first-child { padding-left: 21px; }
.selected td:first-child::before {
  content: "";
  position: absolute;
  inset: -1px auto 0 -2px;
  width: 5px;
  background: #e74c3c;
}
.selected td:first-child::after {
  content: "";
  position: absolute;
  inset: -1px 1px 0 8px;
  border: 3px solid #1cb04b;
}
.scrollbar {
  display: flex;
  flex-direction: column;
  align-items: center;
  align-self: stretch;
  width: 13px;
  max-height: 479px;
  background: #f4f4f4;
}
.scrollbar .thumb { flex: 1; width: 100%; background: #c1c1c1; }
.arrow-up, .arrow-down { margin: 5px 0; border: 4px solid transparent; }
.arrow-up { border-top: 0; border-bottom-color: #555; }
.arrow-down { border-bottom: 0; border-top-color: #999; }

/* Side panel */
.panel { width: 333px; padding: 3px 6px 0 0; background: #fff; box-shadow: -1px 0 2px rgba(0, 0, 0, .2); }
.panel-box { border: 3px solid #1cb04b; padding-bottom: 15px; }
.close { display: block; padding: 6px 8px 6px 5px; background: #f0f0f0; border-radius: 0 0 4px 0; color: #333; }
.form { display: flex; flex-direction: column; padding: 30px 9px 0 15px; }
.label { margin-bottom: 3px; font-weight: 300; color: #777; }
.picker {
  display: grid;
  grid-template-columns: repeat(8, minmax(0, 260px));
  grid-auto-rows: 27px;
  margin-bottom: 21px;
  padding: 3px 34px 4px 2px;
  border: 1px solid #ddd;
  border-radius: 3px;
  color: #a8a8a8;
}
.picker button { display: flex; align-items: center; justify-content: center; }
.picker [aria-pressed="true"] { color: #3492e6; }
.field {
  height: 23px;
  margin-top: 4px;
  padding: 0 4px 2px;
  border: 1px solid #ddd;
  border-radius: 3px;
  background: #f4f4f4;
  font-weight: 300;
  color: #777;
}

/* Chat launcher */
.chat {
  position: fixed;
  right: 26px;
  bottom: 13px;
  width: 54px;
  height: 54px;
  border-radius: 50%;
  background: #0b5a94;
  box-shadow: 0 2px 12px rgba(0, 0, 0, .2);
}
.chat svg { display: block; width: 28px; height: 32px; margin: 0 auto; }
```
